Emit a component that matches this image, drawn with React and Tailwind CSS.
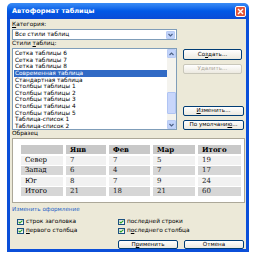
const items = [
  'Сетка таблицы 6',
  'Сетка таблицы 7',
  'Сетка таблицы 8',
  'Современная таблица',
  'Стандартная таблица',
  'Столбцы таблицы 1',
  'Столбцы таблицы 2',
  'Столбцы таблицы 3',
  'Столбцы таблицы 4',
  'Столбцы таблицы 5',
  'Таблица-список 1',
  'Таблица-список 2',
]

const rows = [
  { name: 'Север', vals: ['7', '7', '5', '19'], bg: 'bg-[#f1f1f1]' },
  { name: 'Запад', vals: ['6', '4', '7', '17'], bg: 'bg-[#d6d6d6]' },
  { name: 'Юг', vals: ['8', '7', '9', '24'], bg: 'bg-[#f1f1f1]' },
  { name: 'Итого', vals: ['21', '18', '21', '60'], bg: 'bg-[#d6d6d6]' },
]

function Chevron({ up }) {
  return (
    <svg width="5" height="4" viewBox="0 0 5 4">
      <path d={up ? 'M0.5 3 L2.5 1 L4.5 3' : 'M0.5 1 L2.5 3 L4.5 1'} stroke="#4d6185" strokeWidth="1.2" fill="none" />
    </svg>
  )
}

function Btn({ children, disabled, className = '' }) {
  return (
    <div
      className={`flex items-center justify-center rounded-[2px] border bg-gradient-to-b from-white to-[#ece9e0] text-[5.6px] leading-none ${
        disabled ? 'border-[#c9c7ba] text-[#aca899]' : 'border-[#003c74] text-black'
      } ${className}`}
    >
      {children}
    </div>
  )
}

function Check({ children }) {
  return (
    <div className="flex items-center gap-[2px] h-[9px]">
      <div className="w-[7px] h-[6px] border border-[#1c5180] bg-gradient-to-br from-[#dcdcd7] to-white flex items-center justify-center">
        <svg width="5" height="4" viewBox="0 0 5 4">
          <path d="M0.6 1.9 L1.9 3.1 L4.4 0.6" stroke="#21a121" strokeWidth="1.1" fill="none" />
        </svg>
      </div>
      <span className="text-[5.8px] leading-none">{children}</span>
    </div>
  )
}

export default function App() {
  return (
    <div className="w-[257px] h-[259px] bg-white pt-[3px] pl-[7px]" style={{ fontFamily: '"DejaVu Sans", Verdana, sans-serif' }}>
      <div className="w-[242px] h-[249px] flex flex-col">
        {/* title bar */}
        <div className="h-[16px] rounded-t-[5px] bg-gradient-to-b from-[#3a8cf5] via-[#0058e6] to-[#0a4bd6] flex items-center justify-between pl-[5px] pr-[3px]">
          <span className="text-white font-bold text-[6.6px] leading-none">Автоформат таблицы</span>
          <div className="w-[11px] h-[11px] rounded-[2px] border border-white bg-[#e2553a] flex items-center justify-center">
            <svg width="7" height="7" viewBox="0 0 7 7">
              <path d="M1 1 L6 6 M6 1 L1 6" stroke="white" strokeWidth="1.4" />
            </svg>
          </div>
        </div>

        {/* body */}
        <div className="flex-1 border-x-[3px] border-b-[3px] border-[#0b4fd9] bg-[#ece9d8] pl-[2px] pr-[1px] flex flex-col">
          <div className="h-[10px] flex items-end pb-[1px] text-[5.8px] leading-none">
            <span><u>К</u>атегория:</span>
          </div>
          <div className="w-[165px] h-[11px] border border-[#7f9db9] bg-white flex items-center justify-between pl-[2px] pr-[1px]">
            <span className="text-[5.8px] leading-none">Все стили таблиц</span>
            <div className="w-[9px] h-[8px] rounded-[1px] bg-[#c1d3fb] border border-[#b9cbf3] flex items-center justify-center">
              <Chevron />
            </div>
          </div>
          <div className="h-[8px] flex items-end pb-[1px] text-[5.8px] leading-none">
            <span>Стили <u>т</u>аблиц:</span>
          </div>

          <div className="flex gap-[6px]">
            <div className="w-[165px] h-[82px] border border-[#7f9db9] bg-white flex">
              <div className="flex-1 pt-[1px] pl-[1px]">
                {items.map((t, i) => (
                  <div
                    key={t}
                    className={`h-[6.65px] pl-[1px] text-[5.8px] leading-[6.65px] whitespace-nowrap ${
                      i === 3 ? 'bg-[#316ac5] text-white' : 'text-black'
                    }`}
                  >
                    {t}
                  </div>
                ))}
              </div>
              <div className="w-[9px] bg-[#f4f3ee] flex flex-col justify-between">
                <div className="h-[9px] rounded-[1px] bg-[#c1d3fb] border border-[#b9cbf3] flex items-center justify-center">
                  <Chevron up />
                </div>
                <div className="flex-1 flex flex-col justify-end pb-[6px]">
                  <div className="h-[22px] rounded-[1px] bg-[#c8d6fb] border border-[#b0c4f3]" />
                </div>
                <div className="h-[9px] rounded-[1px] bg-[#c1d3fb] border border-[#b9cbf3] flex items-center justify-center">
                  <Chevron />
                </div>
              </div>
            </div>
            <div className="w-[61px] flex flex-col pt-[1px]">
              <Btn className="h-[11px] mr-[2px]">Со<u>з</u>дать...</Btn>
              <Btn disabled className="h-[10px] mt-[4px] mr-[2px]">Удалить...</Btn>
              <div className="flex-1" />
              <Btn className="h-[10px]"><u>И</u>зменить...</Btn>
              <Btn className="h-[10px] mt-[4px]">По умолчани<u>ю</u>...</Btn>
            </div>
          </div>

          <div className="h-[8px] flex items-end pb-[1px] text-[5.8px] leading-none">
            <span>Образец</span>
          </div>
          <div className="w-[233px] h-[65px] border border-[#aca899] bg-white pl-[8px] pt-[6px]">
            <div className="grid grid-cols-[42px_40px_41px_42px_43px] gap-x-[3px] gap-y-[1.5px] text-[7px] leading-none" style={{ fontFamily: '"DejaVu Serif", "Liberation Serif", serif' }}>
              <div className="h-[9px] bg-[#c8c8c8]" />
              {['Янв', 'Фев', 'Мар', 'Итого'].map(h => (
                <div key={h} className="h-[9px] bg-[#c8c8c8] font-bold flex items-center pl-[4px]">{h}</div>
              ))}
              {rows.map(r => (
                <>
                  <div key={r.name} className={`h-[9px] ${r.bg} flex items-center pl-[4px]`}>{r.name}</div>
                  {r.vals.map((v, i) => (
                    <div key={r.name + i} className={`h-[9px] ${r.bg} flex items-center pl-[4px] text-[#222]`}>{v}</div>
                  ))}
                </>
              ))}
            </div>
          </div>

          <div className="h-[11px] flex items-end pb-[1px] text-[5.6px] leading-none text-[#215dc6]">
            <span>Изменить оформление</span>
          </div>
          <div className="grid grid-cols-[101px_1fr] pl-[5px] pt-[3px]">
            <Check>строк заголовка</Check>
            <Check>последней строки</Check>
            <Check><u>п</u>ервого столбца</Check>
            <Check>п<u>о</u>следнего столбца</Check>
          </div>
          <div className="flex justify-end gap-[6px] pr-[1px] mt-[5px]">
            <Btn className="w-[60px] h-[9px]">П<u>р</u>именить</Btn>
            <Btn className="w-[60px] h-[9px]">Отмена</Btn>
          </div>
        </div>
      </div>
    </div>
  )
}
